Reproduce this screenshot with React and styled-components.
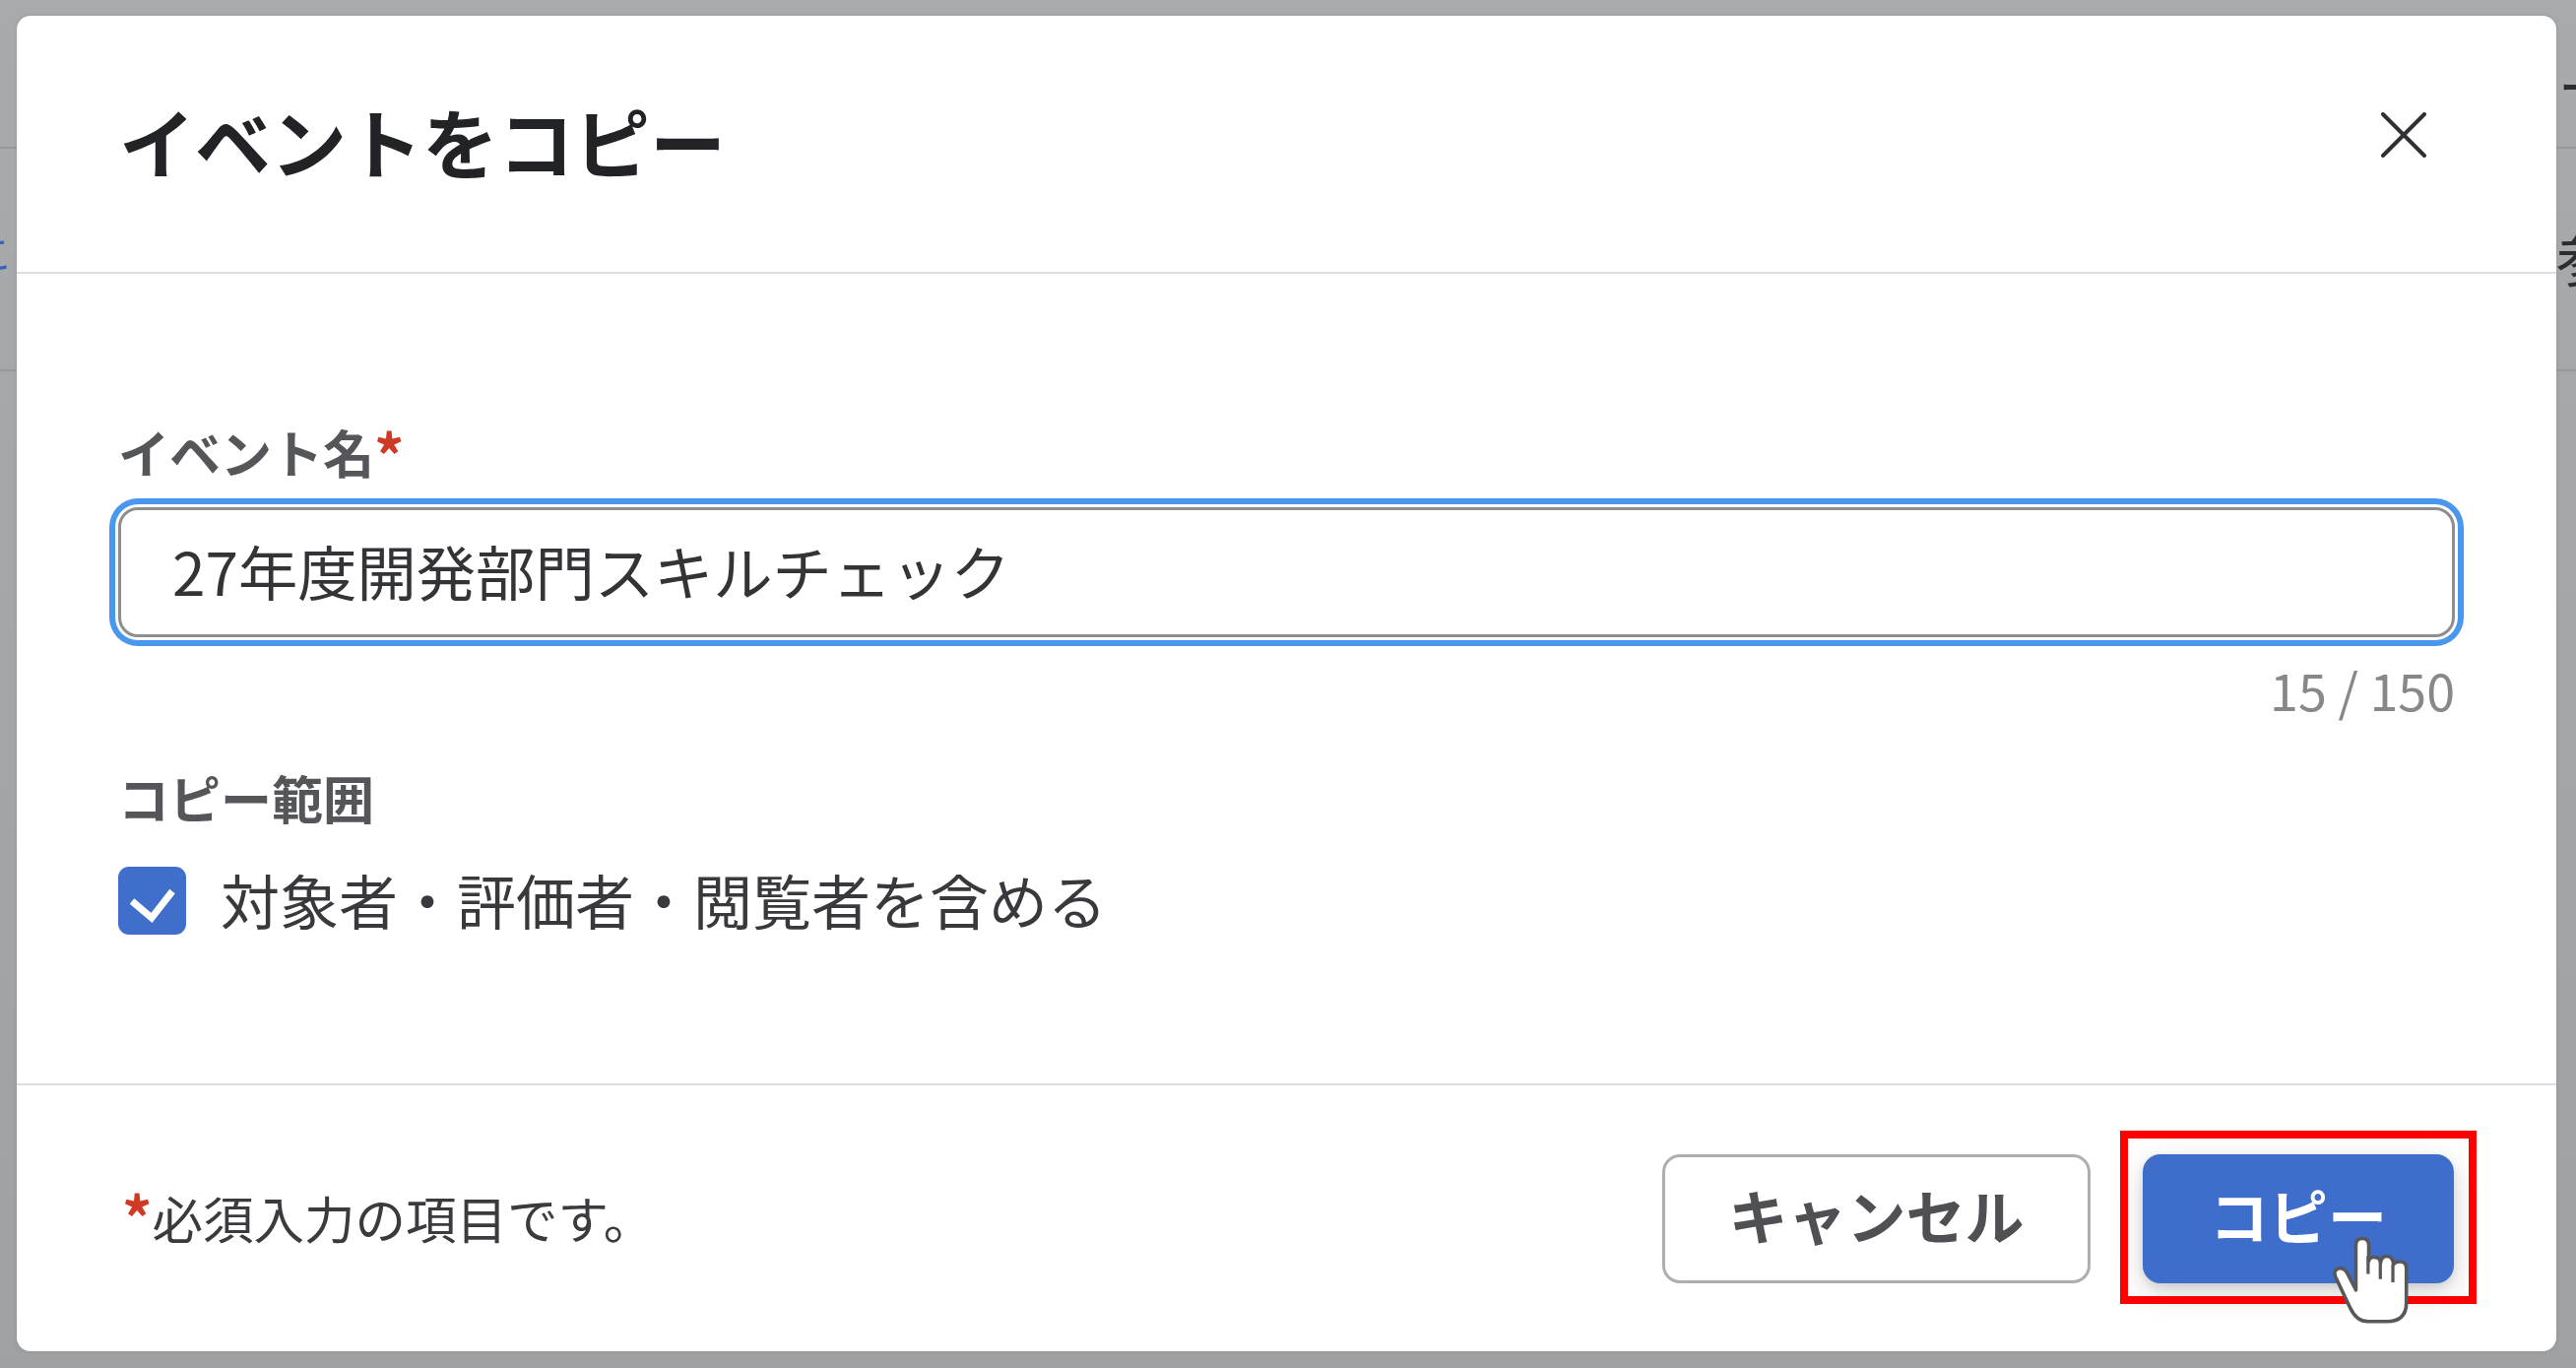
import React from "react";
import styled, { createGlobalStyle } from "styled-components";

const FONT = `"Noto Sans CJK JP", "Noto Sans", sans-serif`;

const Global = createGlobalStyle`
  html, body { margin: 0; padding: 0; }
  body { font-family: ${FONT}; background: #a9aaac; overflow: hidden; }
  * { box-sizing: border-box; }
`;

const Page = styled.div`
  position: relative;
  width: 2616px;
  height: 1389px;
  padding: 16px 20px 17px 17px;
  overflow: hidden;
  background: linear-gradient(#a9aaac, #a0a1a3);
  display: flex;
`;

/* what is left visible of the page behind the modal */
const BackdropRule = styled.div`
  position: absolute;
  left: 0;
  right: 0;
  top: ${(p) => p.$top}px;
  height: 2px;
  background: #97989a;
`;

const BackdropGlyph = styled.span`
  position: absolute;
  left: ${(p) => p.$left}px;
  top: ${(p) => p.$top}px;
  font-size: ${(p) => p.$size}px;
  line-height: 1;
  color: ${(p) => p.$color};
`;

const Dialog = styled.div`
  position: relative;
  flex: 1;
  display: flex;
  flex-direction: column;
  background: #fff;
  border-radius: 14px;
  box-shadow: 0 0 4px rgba(0, 0, 0, 0.12);
`;

const Header = styled.header`
  height: 262px;
  flex: none;
  display: flex;
  justify-content: space-between;
  align-items: flex-start;
  padding: 82px 132px 0 104px;
  border-bottom: 2px solid #dcdde2;
`;

const Title = styled.h2`
  margin: 0;
  font-size: 77px;
  line-height: 90px;
  font-weight: 700;
  color: #222326;
`;

const CloseButton = styled.button`
  border: 0;
  padding: 0;
  margin-top: 16px;
  width: 46px;
  height: 46px;
  display: block;
  background: none;
  color: #2f3033;
`;

const Body = styled.div`
  flex: 1;
  display: flex;
  flex-direction: column;
  padding: 146px 103px 0;
`;

const FieldLabel = styled.div`
  height: 70px;
  font-size: 52px;
  line-height: 70px;
  font-weight: 700;
  color: #55565a;
  margin-top: ${(p) => p.$gap || 0}px;
`;

const Required = styled.span`
  color: #cf3a24;
  font-weight: 700;
  font-size: 60px;
  line-height: 1;
  vertical-align: ${(p) => p.$lift}px;
`;

const TextInput = styled.input`
  display: block;
  width: 100%;
  height: 132px;
  margin-top: 21px;
  padding: 0 52px 6px;
  border: 3px solid #8e8e91;
  border-radius: 20px;
  outline: none;
  background: #fff;
  font-family: ${FONT};
  font-size: 60.3px;
  color: #333438;
  box-shadow: 0 0 0 3px #fff, 0 0 0 9px #4a97f0;
`;

const Counter = styled.div`
  margin-top: 23px;
  text-align: right;
  font-size: 52px;
  line-height: 60px;
  color: #87888c;
`;

const CheckRow = styled.label`
  display: flex;
  align-items: center;
  gap: 35px;
  margin-top: 35px;
  height: 69px;
  font-size: 60px;
  line-height: 69px;
  color: #38393c;
`;

const CheckBox = styled.span`
  width: 69px;
  height: 69px;
  flex: none;
  border-radius: 11px;
  background: #3f6fcb;
  display: block;
`;

const CheckMark = styled.svg`
  display: block;
  width: 69px;
  height: 69px;
`;

const CheckLabel = styled.span`
  position: relative;
  top: -2px;
`;

const Footer = styled.footer`
  height: 272px;
  flex: none;
  display: flex;
  align-items: center;
  justify-content: space-between;
  padding: 0 104px 0 107px;
  border-top: 2px solid #dcdde2;
`;

const Note = styled.div`
  height: 70px;
  margin-top: -2px;
  font-size: 51.5px;
  line-height: 70px;
  color: #3a3b3f;
`;

const Actions = styled.div`
  display: flex;
  gap: 53px;
`;

const Button = styled.button`
  position: relative;
  height: 131px;
  width: ${(p) => p.$width}px;
  border-radius: 18px;
  font-family: ${FONT};
  font-size: 60px;
  font-weight: 700;
  padding: 0 0 9px;
  border: ${(p) => (p.$primary ? "0" : "3px solid #adaeb0")};
  background: ${(p) => (p.$primary ? "#3f6dcb" : "#fff")};
  color: ${(p) => (p.$primary ? "#fff" : "#4f5054")};
  box-shadow: ${(p) =>
    p.$primary ? "0 10px 30px rgba(0,0,0,0.16), 0 3px 8px rgba(0,0,0,0.10)" : "none"};
`;

const Highlight = styled.span`
  position: absolute;
  left: -23px;
  right: -23px;
  top: -24px;
  bottom: -21px;
  border: 8px solid #ff0000;
`;

const Pointer = styled.svg`
  position: absolute;
  left: 191px;
  top: 82px;
  width: 80px;
  height: 92px;
`;

export default function App() {
  return (
    <>
      <Global />
      <Page>
        <BackdropRule $top={149} />
        <BackdropRule $top={375} />
        <BackdropGlyph $left={-27} $top={236} $size={40} $color="#3a62bd">こ</BackdropGlyph>
        <BackdropGlyph $left={2596} $top={230} $size={60} $color="#2c2d30">参</BackdropGlyph>
        <BackdropGlyph $left={2598} $top={58} $size={56} $color="#2c2d30">ー</BackdropGlyph>
        <Dialog>
          <Header>
            <Title>イベントをコピー</Title>
            <CloseButton aria-label="閉じる">
              <svg width="46" height="46" viewBox="0 0 46 46" fill="none" stroke="currentColor" strokeWidth="4" strokeLinecap="round">
                <path d="M2 2L44 44M44 2L2 44" />
              </svg>
            </CloseButton>
          </Header>
          <Body>
            <FieldLabel>
              イベント名<Required $lift={-5}>*</Required>
            </FieldLabel>
            <TextInput readOnly value="27年度開発部門スキルチェック" />
            <Counter>15 / 150</Counter>
            <FieldLabel $gap={45}>コピー範囲</FieldLabel>
            <CheckRow>
              <CheckBox>
                <CheckMark viewBox="0 0 69 69" fill="none" stroke="#fff" strokeWidth="7">
                  <path d="M14 35L34 52L55 25" />
                </CheckMark>
              </CheckBox>
              <CheckLabel>対象者・評価者・閲覧者を含める</CheckLabel>
            </CheckRow>
          </Body>
          <Footer>
            <Note>
              <Required $lift={-2}>*</Required>必須入力の項目です。
            </Note>
            <Actions>
              <Button $width={435}>キャンセル</Button>
              <Button $width={316} $primary>
                コピー
                <Highlight />
                <Pointer viewBox="650 340 245 280">
                  <path
                    d="M728 510L728 370Q728 350 748 350Q768 350 768 370L768 420Q770 408 785 408Q803 408 805 425Q807 405 825 405Q843 405 845 430Q850 422 865 422Q885 422 885 442L885 550Q885 608 825 608L765 608Q730 608 710 565L665 470Q655 445 680 442Q695 442 705 465Z"
                    fill="#fff"
                    stroke="#58585a"
                    strokeWidth="11"
                    strokeLinejoin="round"
                  />
                  <path d="M766 405V460M804 420V476M843 430V486" fill="none" stroke="#58585a" strokeWidth="10" />
                </Pointer>
              </Button>
            </Actions>
          </Footer>
        </Dialog>
      </Page>
    </>
  );
}
